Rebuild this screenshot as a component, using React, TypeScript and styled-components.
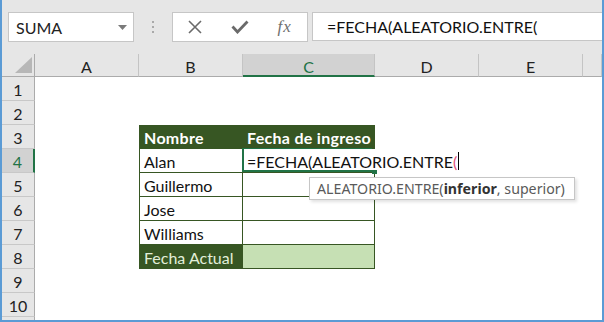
import React from 'react';
import styled, { createGlobalStyle } from 'styled-components';

const GlobalStyle = createGlobalStyle`
  html, body { margin: 0; padding: 0; background: #ffffff; }
`;

const SHEET_FONT = `'Lato', 'Liberation Sans', sans-serif`;
const UI_FONT = `'Noto Sans', 'Liberation Sans', sans-serif`;
const GREEN = '#217346';
const DARK = '#375623';
const LIGHT = '#c6e0b4';

const Window = styled.div`
    width: 604px;
    height: 322px;
    box-sizing: border-box;
    border: 2px solid #5b9bd5;
    border-top: none;
    background: #ffffff;
    overflow: hidden;
    display: flex;
    flex-direction: column;
`;

const Toolbar = styled.div`
    height: 54px;
    flex: none;
    box-sizing: border-box;
    padding: 12px 0 0 6px;
    background: #e6e6e6;
    display: flex;
    align-items: flex-start;
`;

const NameBox = styled.div`
    width: 126px;
    height: 30px;
    box-sizing: border-box;
    border: 1px solid #c6c6c6;
    background: #ffffff;
    display: flex;
    align-items: center;
    justify-content: space-between;
    padding: 0 6px 0 7px;
    font-family: ${SHEET_FONT};
    font-size: 16px;
    color: #222;
`;

const Grip = styled.div`
    width: 38px;
    height: 30px;
    display: flex;
    flex-direction: column;
    align-items: center;
    justify-content: center;
    gap: 3px;
`;

const GripDot = styled.span`
    width: 2px;
    height: 2px;
    background: #a9a9a9;
`;

const ButtonBox = styled.div`
    width: 136px;
    height: 30px;
    box-sizing: border-box;
    border: 1px solid #c6c6c6;
    background: #ffffff;
    display: flex;
`;

const IconButton = styled.div`
    flex: 1;
    display: flex;
    align-items: center;
    justify-content: center;
    color: #6a6a6a;
`;

const Fx = styled.span`
    font-family: 'Liberation Serif', serif;
    font-style: italic;
    font-size: 17px;
    color: #6f6f6f;
    letter-spacing: 1px;
`;

const FormulaInput = styled.div`
    flex: 1;
    height: 29px;
    margin-left: 4px;
    box-sizing: border-box;
    border: 1px solid #c6c6c6;
    border-right: none;
    background: #ffffff;
    display: flex;
    align-items: center;
    padding-left: 14px;
    font-family: ${SHEET_FONT};
    font-size: 16px;
    color: #111;
    white-space: nowrap;
`;

const Sheet = styled.div`
    flex: 1;
    display: grid;
    grid-template-columns: 33px 104px 104px 132px 104px 104px 1fr;
    grid-template-rows: 23px repeat(11, 24px);
    font-family: ${SHEET_FONT};
    font-size: 16px;
`;

const Corner = styled.div`
    background: #e6e6e6;
    border-right: 1px solid #ababab;
    border-bottom: 1px solid #ababab;
    box-sizing: border-box;
    display: flex;
    align-items: flex-end;
    justify-content: flex-end;
    padding: 0 2px 3px 0;
`;

const ColHead = styled.div<{ $active?: boolean }>`
    box-sizing: border-box;
    background: ${p => (p.$active ? '#d2d2d2' : '#e6e6e6')};
    border-bottom: ${p => (p.$active ? `2px solid ${GREEN}` : '1px solid #ababab')};
    border-right: 1px solid #c4c4c4;
    color: ${p => (p.$active ? GREEN : '#222')};
    display: flex;
    align-items: center;
    justify-content: center;
    padding-top: 3px;
`;

const RowHead = styled.div<{ $active?: boolean }>`
    box-sizing: border-box;
    background: ${p => (p.$active ? '#d2d2d2' : '#e6e6e6')};
    border-right: ${p => (p.$active ? `2px solid ${GREEN}` : '1px solid #ababab')};
    border-bottom: 1px solid #c8c8c8;
    color: ${p => (p.$active ? GREEN : '#222')};
    display: flex;
    align-items: center;
    justify-content: center;
    padding-top: 1px;
`;

const Cell = styled.div<{ $bg?: string; $fg?: string; $bold?: boolean; $boxed?: boolean; $first?: boolean }>`
    box-sizing: border-box;
    background: ${p => p.$bg || '#ffffff'};
    color: ${p => p.$fg || '#111'};
    font-weight: ${p => (p.$bold ? 700 : 400)};
    letter-spacing: ${p => (p.$bold ? '0.3px' : 'normal')};
    border-right: ${p => (p.$boxed ? `1px solid ${DARK}` : 'none')};
    border-bottom: ${p => (p.$boxed ? `1px solid ${DARK}` : 'none')};
    border-left: ${p => (p.$first ? `1px solid ${DARK}` : 'none')};
    display: flex;
    align-items: center;
    padding: 1px 0 0 4px;
    white-space: nowrap;
    overflow: hidden;
`;

const EditCell = styled.div`
    position: relative;
    z-index: 2;
    box-sizing: border-box;
    background: #ffffff;
    border-bottom: 1px solid ${DARK};
    display: flex;
    align-items: center;
    padding: 1px 0 0 4px;
    white-space: nowrap;
    color: #111;

    &::before {
        content: '';
        position: absolute;
        left: -1px;
        top: -1px;
        width: 130px;
        height: 24px;
        border-left: 2px solid ${GREEN};
        border-bottom: 2px solid ${GREEN};
        border-top: 1px solid ${GREEN};
        box-sizing: border-box;
    }

    &::after {
        content: '';
        position: absolute;
        left: 129px;
        top: 21px;
        width: 5px;
        height: 4px;
        background: ${GREEN};
    }
`;

const Paren = styled.span`
    color: #e0537a;
`;

const Caret = styled.span`
    flex: none;
    width: 1px;
    height: 18px;
    margin-left: 1px;
    background: #000000;
`;

const Tooltip = styled.div`
    position: absolute;
    left: 66px;
    top: 28px;
    height: 23px;
    box-sizing: border-box;
    padding: 0 9px 0 7px;
    border: 1px solid #c6c6c6;
    background: #ffffff;
    box-shadow: 2px 2px 3px rgba(0, 0, 0, 0.12);
    display: flex;
    align-items: center;
    font-family: ${UI_FONT};
    font-size: 14.2px;
    color: #5a5a5a;
    white-space: nowrap;
    z-index: 3;
`;

const Strong = styled.b`
    color: #333;
`;

type Row = { name?: string; date?: string; kind: 'head' | 'body' | 'foot' | 'blank' | 'edit' };

const rows: Row[] = [
    { kind: 'blank' },
    { kind: 'blank' },
    { kind: 'head', name: 'Nombre', date: 'Fecha de ingreso' },
    { kind: 'edit', name: 'Alan' },
    { kind: 'body', name: 'Guillermo' },
    { kind: 'body', name: 'Jose' },
    { kind: 'body', name: 'Williams' },
    { kind: 'foot', name: 'Fecha Actual' },
    { kind: 'blank' },
    { kind: 'blank' },
    { kind: 'blank' },
];

const columns = ['A', 'B', 'C', 'D', 'E', ''];

const XIcon = () => (
    <svg width="16" height="14" viewBox="0 0 16 14">
        <path d="M2 1 L14 13 M14 1 L2 13" stroke="currentColor" strokeWidth="1.6" fill="none" />
    </svg>
);

const CheckIcon = () => (
    <svg width="18" height="14" viewBox="0 0 18 14">
        <path d="M1.5 6.5 L6.5 12 L16.5 1.5" stroke="currentColor" strokeWidth="2.8" fill="none" />
    </svg>
);

const Arrow = () => (
    <svg width="9" height="5" viewBox="0 0 9 5">
        <path d="M0 0 H9 L4.5 5 Z" fill="#7a7a7a" />
    </svg>
);

const App: React.FC = () => {
    return (
        <Window>
            <GlobalStyle />
            <Toolbar>
                <NameBox>
                    SUMA
                    <Arrow />
                </NameBox>
                <Grip>
                    <GripDot />
                    <GripDot />
                    <GripDot />
                </Grip>
                <ButtonBox>
                    <IconButton><XIcon /></IconButton>
                    <IconButton><CheckIcon /></IconButton>
                    <IconButton><Fx>fx</Fx></IconButton>
                </ButtonBox>
                <FormulaInput>=FECHA(ALEATORIO.ENTRE(</FormulaInput>
            </Toolbar>
            <Sheet>
                <Corner>
                    <svg width="17" height="16" viewBox="0 0 17 16">
                        <path d="M17 0 V16 H0 Z" fill="#b7b7b7" />
                    </svg>
                </Corner>
                {columns.map((c, i) => (
                    <ColHead key={i} $active={c === 'C'}>{c}</ColHead>
                ))}
                {rows.map((r, i) => (
                    <React.Fragment key={i}>
                        <RowHead $active={i === 3}>{i < 10 ? i + 1 : ''}</RowHead>
                        <Cell />
                        {r.kind === 'blank' && <Cell />}
                        {r.kind === 'blank' && <Cell />}
                        {r.kind === 'head' && (
                            <>
                                <Cell $bg={DARK} $fg="#ffffff" $bold $boxed $first>{r.name}</Cell>
                                <Cell $bg={DARK} $fg="#ffffff" $bold $boxed>{r.date}</Cell>
                            </>
                        )}
                        {r.kind === 'body' && (
                            <>
                                <Cell $boxed $first>{r.name}</Cell>
                                <Cell $boxed />
                            </>
                        )}
                        {r.kind === 'edit' && (
                            <>
                                <Cell $boxed $first>{r.name}</Cell>
                                <EditCell>
                                    =FECHA(ALEATORIO.ENTRE<Paren>(</Paren><Caret />
                                    <Tooltip>
                                        ALEATORIO.ENTRE(<Strong>inferior</Strong>, superior)
                                    </Tooltip>
                                </EditCell>
                            </>
                        )}
                        {r.kind === 'foot' && (
                            <>
                                <Cell $bg={DARK} $fg="#e2efda" $boxed $first>{r.name}</Cell>
                                <Cell $bg={LIGHT} $boxed />
                            </>
                        )}
                        <Cell />
                        <Cell />
                        <Cell />
                    </React.Fragment>
                ))}
            </Sheet>
        </Window>
    );
};

export default App;
